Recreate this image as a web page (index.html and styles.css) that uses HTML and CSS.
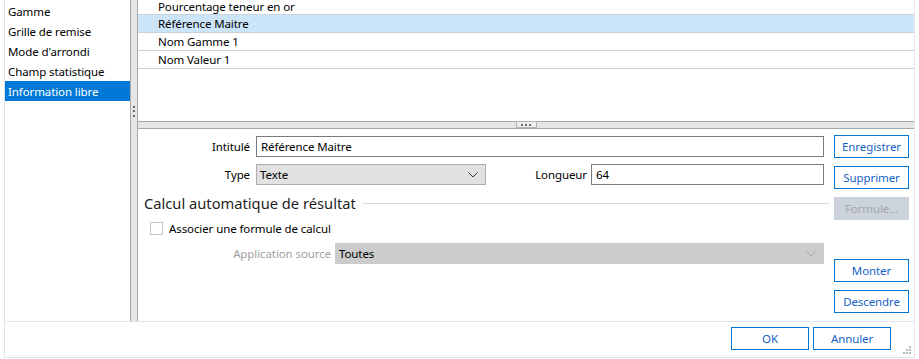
FILE: index.html
```html
<!DOCTYPE html>
<html lang="fr">
<head>
<meta charset="UTF-8">
<meta name="viewport" content="width=device-width, initial-scale=1.0">
<title>Information libre</title>
<link rel="stylesheet" href="styles.css">
</head>
<body>
    <div class="frame">
        <div class="main">
            <ul class="nav">
                <li>Gamme</li>
                <li>Grille de remise</li>
                <li>Mode d'arrondi</li>
                <li>Champ statistique</li>
                <li class="active">Information libre</li>
            </ul>
            <div class="vsplit">
                <svg class="grip-v" width="2" height="11" viewBox="0 0 2 11">
                    <rect x="0" y="0" width="2" height="2" fill="#6b6b6b"/>
                    <rect x="0" y="4" width="2" height="2" fill="#6b6b6b"/>
                    <rect x="0" y="9" width="2" height="2" fill="#6b6b6b"/>
                </svg>
            </div>
            <div class="content">
                <div class="list">
                    <ul class="rows">
                        <li class="first">Pourcentage teneur en or</li>
                        <li class="selected">Référence Maitre</li>
                        <li>Nom Gamme 1</li>
                        <li>Nom Valeur 1</li>
                    </ul>
                </div>
                <div class="hsplit">
                    <span class="grip-h">
                        <svg width="10" height="2" viewBox="0 0 10 2">
                            <rect x="0" y="0" width="2" height="2" fill="#6b6b6b"/>
                            <rect x="4" y="0" width="2" height="2" fill="#6b6b6b"/>
                            <rect x="8" y="0" width="2" height="2" fill="#6b6b6b"/>
                        </svg>
                    </span>
                </div>
                <div class="editor">
                    <div class="fields">
                        <div class="row">
                            <label class="lbl">Intitulé</label>
                            <div class="input grow">Référence Maitre</div>
                        </div>
                        <div class="row row-type">
                            <label class="lbl">Type</label>
                            <div class="select type-select">
                                <span>Texte</span>
                                <svg width="10" height="6" viewBox="0 0 10 6"><polyline points="0.5,0.5 5,5 9.5,0.5" fill="none" stroke="#3c3c3c" stroke-width="1"/></svg>
                            </div>
                            <label class="lbl-long">Longueur</label>
                            <div class="input long-input">64</div>
                        </div>
                        <div class="section">
                            <span class="section-title">Calcul automatique de résultat</span>
                            <span class="section-line"></span>
                        </div>
                        <div class="check-row">
                            <span class="checkbox"></span>
                            <span>Associer une formule de calcul</span>
                        </div>
                        <div class="row row-app">
                            <label class="lbl lbl-app">Application source</label>
                            <div class="select select-off grow">
                                <span>Toutes</span>
                                <svg width="10" height="6" viewBox="0 0 10 6"><polyline points="0.5,0.5 5,5 9.5,0.5" fill="none" stroke="#a8a8a8" stroke-width="1"/></svg>
                            </div>
                        </div>
                    </div>
                    <div class="actions">
                        <button class="btn">Enregistrer</button>
                        <button class="btn">Supprimer</button>
                        <button class="btn btn-off">Formule...</button>
                        <button class="btn">Monter</button>
                        <button class="btn">Descendre</button>
                    </div>
                </div>
            </div>
        </div>
        <div class="footer">
            <button class="btn btn-wide">OK</button>
            <button class="btn btn-wide">Annuler</button>
            <svg class="resize" width="8" height="8" viewBox="0 0 8 8">
                <rect x="6" y="0" width="2" height="2" fill="#b8b8b8"/>
                <rect x="3" y="3" width="2" height="2" fill="#b8b8b8"/>
                <rect x="6" y="3" width="2" height="2" fill="#b8b8b8"/>
                <rect x="0" y="6" width="2" height="2" fill="#b8b8b8"/>
                <rect x="3" y="6" width="2" height="2" fill="#b8b8b8"/>
                <rect x="6" y="6" width="2" height="2" fill="#b8b8b8"/>
            </svg>
        </div>
    </div>
</body>
</html>
```

FILE: styles.css
```css
body {
    margin: 0;
    font-family: "Noto Sans", sans-serif;
    font-size: 11.5px;
    letter-spacing: -0.1px;
    color: #000;
    background: #fff;
}

.frame {
    margin-left: 4px;
    width: 911px;
    height: 358px;
    box-sizing: border-box;
    border: 1px solid #dfe5ea;
    border-top: none;
    display: flex;
    flex-direction: column;
}

.main {
    height: 321px;
    display: flex;
}

.nav {
    width: 125px;
    margin: 0;
    padding: 1px 0 0;
    list-style: none;
}

.nav li {
    height: 20px;
    line-height: 21px;
    padding-left: 3px;
    white-space: nowrap;
}

.nav li.active {
    background: #0078d7;
    color: #fff;
}

.vsplit {
    width: 8px;
    box-sizing: border-box;
    border-left: 1px solid #a9a9a9;
    border-right: 1px solid #a9a9a9;
    background: #e6e6e6;
    padding: 106px 0 0 2px;
}

.grip-v {
    display: block;
}

.content {
    flex: 1;
    min-width: 0;
    display: flex;
    flex-direction: column;
}

.list {
    height: 123px;
    overflow: hidden;
}

.rows {
    margin: 0;
    padding: 0;
    list-style: none;
}

.rows li {
    height: 17px;
    line-height: 18px;
    border-bottom: 1px solid #cbd3da;
    padding-left: 20px;
}

.rows li.first {
    height: 14px;
    line-height: 13px;
}

.rows li.selected {
    background: #cce4f7;
}

.hsplit {
    height: 8px;
    box-sizing: border-box;
    border-top: 1px solid #a9a9a9;
    border-bottom: 1px solid #a9a9a9;
    background: #e6e6e6;
    display: flex;
    justify-content: center;
}

.grip-h {
    width: 21px;
    height: 7px;
    box-sizing: border-box;
    margin-top: -1px;
    border: 1px solid #b4b4b4;
    background: #efefef;
    display: flex;
    align-items: center;
    justify-content: center;
}

.grip-h svg {
    display: block;
}

.editor {
    flex: 1;
    display: flex;
    padding-right: 5px;
}

.fields {
    flex: 1;
    padding-top: 7px;
}

.row {
    display: flex;
    align-items: center;
    height: 21px;
}

.row-type {
    margin-top: 7px;
}

.lbl {
    width: 112px;
    margin-right: 6px;
    text-align: right;
    flex-shrink: 0;
}

.grow {
    flex: 1;
}

.input {
    height: 21px;
    box-sizing: border-box;
    border: 1px solid #7a7a7a;
    padding-left: 4px;
    line-height: 19px;
}

.select {
    height: 21px;
    box-sizing: border-box;
    border: 1px solid #adadad;
    background: #e1e1e1;
    padding: 0 7px 0 3px;
    display: flex;
    align-items: center;
    justify-content: space-between;
}

.type-select {
    width: 230px;
}

.lbl-long {
    flex: 1;
    text-align: right;
    margin-right: 4px;
}

.long-input {
    width: 233px;
}

.section {
    display: flex;
    align-items: center;
    height: 20px;
    margin: 8px -5px 0 0;
    padding-left: 6px;
}

.section-title {
    font-size: 14.7px;
    letter-spacing: 0;
    color: #1e1e1e;
    white-space: nowrap;
}

.section-line {
    flex: 1;
    height: 1px;
    background: #d2d9df;
    margin-left: 7px;
}

.check-row {
    display: flex;
    align-items: center;
    height: 18px;
    margin-top: 6px;
    padding-left: 12px;
}

.checkbox {
    width: 13px;
    height: 13px;
    box-sizing: border-box;
    border: 1px solid #c6c6c6;
    background: #fff;
    margin-right: 6px;
}

.row-app {
    margin-top: 6px;
}

.lbl-app {
    width: 193px;
    margin-right: 4px;
    color: #a0a0a0;
}

.select-off {
    background: #cccccc;
    border-color: #cccccc;
}

.actions {
    width: 75px;
    margin-left: 10px;
    padding-top: 6px;
    display: flex;
    flex-direction: column;
}

.btn {
    width: 75px;
    height: 23px;
    box-sizing: border-box;
    margin: 0 0 8px;
    padding: 0;
    background: #fff;
    border: 1px solid #0078d7;
    color: #1662c4;
    font-family: "Noto Sans", sans-serif;
    font-size: 11.5px;
    letter-spacing: -0.1px;
}

.btn-off {
    background: #ccd3da;
    border-color: #ccd3da;
    color: #a3a8ad;
    margin-bottom: 39px;
}

.footer {
    flex: 1;
    position: relative;
    border-top: 1px solid #dfe5ea;
    display: flex;
    justify-content: flex-end;
    gap: 4px;
    padding: 5px 23px 0 0;
}

.btn-wide {
    width: 78px;
}

.resize {
    position: absolute;
    right: 3px;
    bottom: 4px;
}
```
